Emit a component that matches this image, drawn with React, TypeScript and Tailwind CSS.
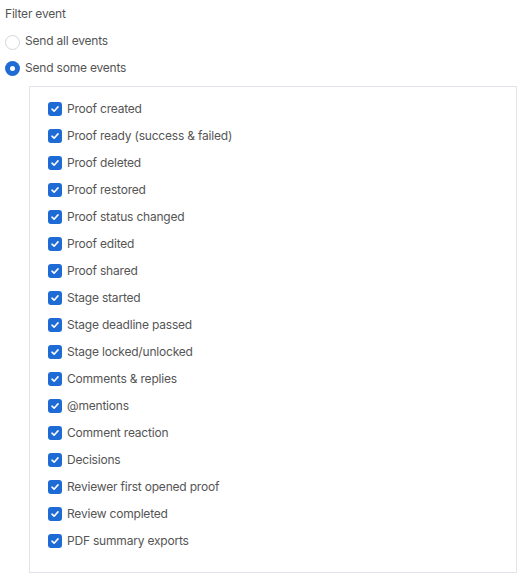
import React from "react";

const events = [
  "Proof created",
  "Proof ready (success & failed)",
  "Proof deleted",
  "Proof restored",
  "Proof status changed",
  "Proof edited",
  "Proof shared",
  "Stage started",
  "Stage deadline passed",
  "Stage locked/unlocked",
  "Comments & replies",
  "@mentions",
  "Comment reaction",
  "Decisions",
  "Reviewer first opened proof",
  "Review completed",
  "PDF summary exports",
];

function Check() {
  return (
    <span className="mt-[1px] flex h-[14px] w-[14px] shrink-0 items-center justify-center rounded-[3px] bg-[#1f6bd6]">
      <svg width="10" height="10" viewBox="0 0 10 10" fill="none">
        <path d="M2 5.2 L4.1 7.2 L8 2.9" stroke="white" strokeWidth="1.6" strokeLinecap="round" strokeLinejoin="round" />
      </svg>
    </span>
  );
}

export default function App() {
  return (
    <div className="w-[524px] h-[579px] bg-white text-[12px] tracking-[-0.2px] text-[#555555]" style={{ fontFamily: "Inter, 'Noto Sans', sans-serif" }}>
      <div className="pl-[5px] h-[27px] flex items-center">Filter event</div>
      <div className="pl-[5px] h-[27px] flex items-center gap-[5px]">
        <span className="mt-[4px] h-[15px] w-[15px] shrink-0 rounded-full border border-[#d4d6dc] bg-white" />
        <span>Send all events</span>
      </div>
      <div className="pl-[5px] h-[27px] flex items-center gap-[5px]">
        <span className="mt-[2px] flex h-[15px] w-[15px] shrink-0 items-center justify-center rounded-full bg-[#1f6bd6]">
          <span className="h-[5px] w-[5px] rounded-full bg-white" />
        </span>
        <span>Send some events</span>
      </div>
      <div className="ml-[29px] mt-[5px] w-[488px] border border-[#e2e4ec] pt-[8px] pb-[18px] pl-[18px]">
        {events.map((e) => (
          <div key={e} className="h-[27px] flex items-center gap-[5px]">
            <Check />
            <span>{e}</span>
          </div>
        ))}
      </div>
    </div>
  );
}
